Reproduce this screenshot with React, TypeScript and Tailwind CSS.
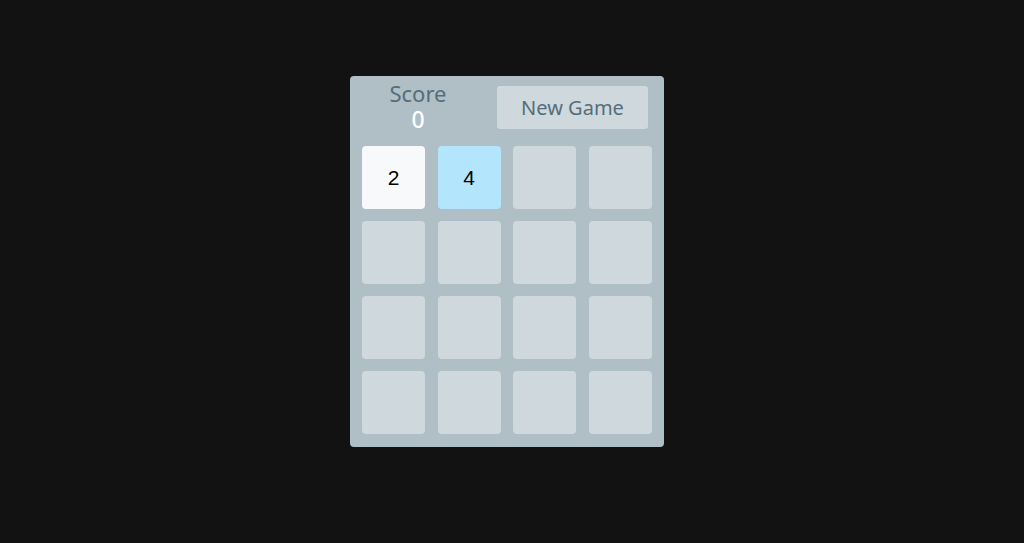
import React from "react";

const tiles: (number | null)[] = [2, 4, null, null, null, null, null, null, null, null, null, null, null, null, null, null];

function tileClass(v: number | null) {
  if (v === 2) return "bg-[#f7f9fb]";
  if (v === 4) return "bg-[#b3e5fc]";
  return "bg-[#cfd8dc]";
}

export default function App() {
  return (
    <div className="min-h-[543px] w-full bg-[#121212] flex justify-center pr-[10px] pt-[76px]">
      <div className="w-[314px] h-[371px] bg-[#b0bec5] rounded-[4px] px-[12px] pt-[5px] flex flex-col">
        <div className="flex items-start h-[49px]">
          <div className="w-[112px] flex flex-col items-center" style={{ fontFamily: '"Noto Sans", sans-serif' }}>
            <div className="text-[22px] leading-[24px] text-[#546e7a]">Score</div>
            <div className="mt-[2px] text-[23px] leading-[25px] font-medium text-white">0</div>
          </div>
          <button
            className="ml-[23px] mt-[5px] w-[151px] h-[43px] rounded-[3px] bg-[#cfd8dc] text-[#546e7a] text-[20px] flex items-center justify-center"
            style={{ fontFamily: '"Noto Sans", sans-serif' }}
          >
            New Game
          </button>
        </div>
        <div className="mt-[16px] grid grid-cols-4 gap-x-[12.5px] gap-y-[12.6px] w-[290px]">
          {tiles.map((v, i) => (
            <div
              key={i}
              className={`h-[62.5px] rounded-[4px] flex items-center justify-center text-[21px] text-black ${tileClass(v)}`}
              style={{ fontFamily: '"Liberation Sans", Arial, sans-serif' }}
            >
              {v ?? ""}
            </div>
          ))}
        </div>
      </div>
    </div>
  );
}
